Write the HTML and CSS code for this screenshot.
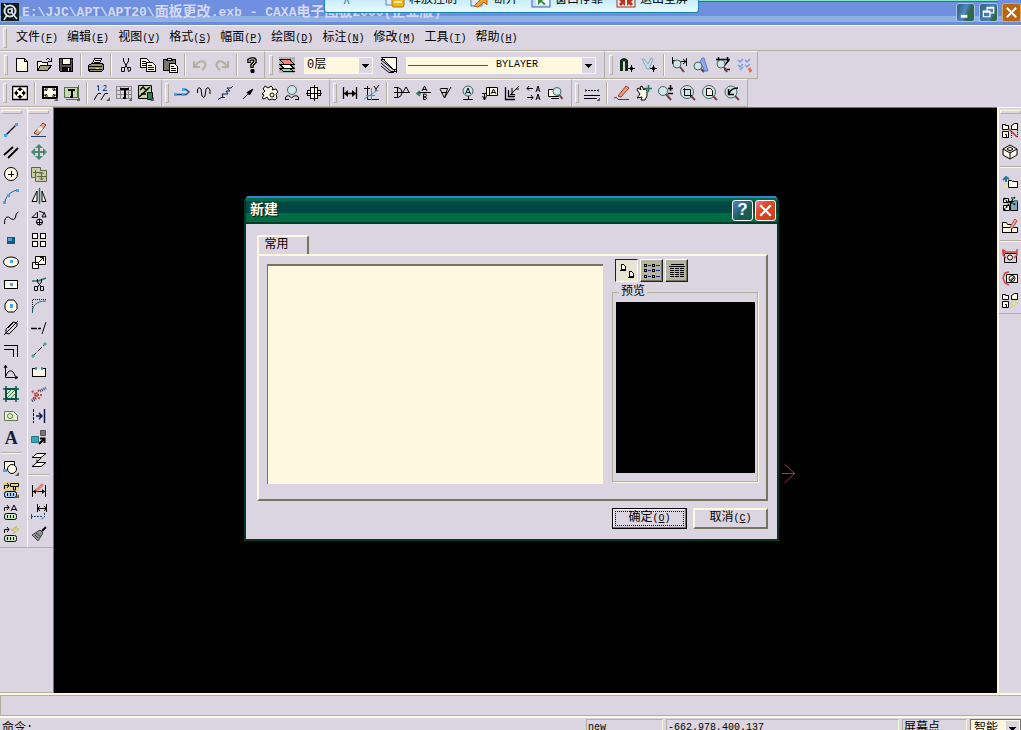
FILE: index.html
```html
<!DOCTYPE html>
<html lang="zh-CN">
<head>
<meta charset="utf-8">
<title>CAXA电子图板2000(企业版)</title>
<link rel="stylesheet" href="styles.css">
</head>
<body>
<header class="titlebar">
  <svg class="appicon" viewBox="0 0 18 18"><rect width="18" height="18" fill="#0a1c14"/><circle cx="9" cy="8" r="5.5" fill="none" stroke="#dde" stroke-width="2"/><circle cx="9" cy="8" r="2" fill="none" stroke="#dde" stroke-width="1.5"/><path d="M11 5v5l5 6M6 12l-3 5M3 1l3 3" stroke="#dde" stroke-width="1.5" fill="none"/></svg>
  <h1 class="title"><span>E:\JJC\APT\APT20\</span>面板更改<span>.exb - CAXA</span>电子图板<span>2000(</span>企业版<span>)</span></h1>
  <div class="winbtns">
    <button class="wb min" aria-label="最小化"><svg viewBox="0 0 18 18"><path d="M4 13h7" stroke-width="3"/></svg></button>
    <button class="wb max" aria-label="还原"><svg viewBox="0 0 18 18"><path d="M3.500 7.500h7v6h-7zM4 8.500h7M7.500 7V3.500h7v6H11M7 4.500h7" stroke-width="1.3"/></svg></button>
    <button class="wb close" aria-label="关闭"><svg viewBox="0 0 18 18"><path d="M4 4l10 10M14 4L4 14" stroke-width="2"/></svg></button>
  </div>
  <div class="mint"></div>
  <div class="remote">
    <button class="rb"><svg viewBox="0 0 20 16"><rect x="1" y="0" width="12" height="13" fill="#e4edf8" stroke="#5b82c0"/><rect x="7" y="5" width="12" height="10" rx="2" fill="#f5b81c" stroke="#b96e0c"/><path d="M9 10h8" stroke="#fff2a8" stroke-width="2"/></svg>释放控制</button>
    <button class="rb"><svg viewBox="0 0 20 16"><path d="M1 14V3h11v11z" fill="#dce9f8" stroke="#4c79b8"/><path d="M4 14l7-7-2-3h8v9l-3-3-6 5z" fill="#f5a02c" stroke="#b85e10"/></svg>断开</button>
    <button class="rb"><svg viewBox="0 0 20 16"><rect x="1" y="1" width="18" height="14" fill="#c8dcf4" stroke="#3d6ab0"/><rect x="5" y="2" width="13" height="11" fill="#eef6ff"/><path d="M7 13V7h6l-2 2 4 3-2 1-3-3z" fill="#318b30"/></svg>窗口停靠</button>
    <button class="rb"><svg viewBox="0 0 20 16"><rect x="1" y="1" width="18" height="14" fill="#fbeee8" stroke="#913522"/><path d="M3 3l5 5V3zM17 3l-5 5V3zM9 14V8H3l2 2-2 2 2 2 2-2zM11 14V8h6l-2 2 2 2-2 2-2-2z" fill="#b4341c"/></svg>退出全屏</button>
  </div>
</header>

<nav class="menubar">
  <i class="grip"></i>
  <button class="mi">文件<span>(<u>F</u>)</span></button>
  <button class="mi">编辑<span>(<u>E</u>)</span></button>
  <button class="mi">视图<span>(<u>V</u>)</span></button>
  <button class="mi">格式<span>(<u>S</u>)</span></button>
  <button class="mi">幅面<span>(<u>P</u>)</span></button>
  <button class="mi">绘图<span>(<u>D</u>)</span></button>
  <button class="mi">标注<span>(<u>N</u>)</span></button>
  <button class="mi">修改<span>(<u>M</u>)</span></button>
  <button class="mi">工具<span>(<u>T</u>)</span></button>
  <button class="mi">帮助<span>(<u>H</u>)</span></button>
</nav>

<div class="row std">
  <div class="band">
    <i class="grip"></i>
    <button class="tb" aria-label="新建"><svg viewBox="0 0 16 16"><path class="w" d="M2.500 1.500h8l3 3v10h-11zM10.500 1.500v3h3"/></svg></button>
    <button class="tb" aria-label="打开"><svg viewBox="0 0 16 16"><path class="w" d="M1.500 13.500v-9h4l1 1h5v3"/><path fill="#a8a47c" d="M1.500 13.500l3-5h11l-4 5z"/><path d="M9.500 3.500c2-3 4-2 5 0M15.500 1v3.500H12"/></svg></button>
    <button class="tb" aria-label="保存"><svg viewBox="0 0 16 16"><path fill="#55584a" d="M1.500 1.500h13v13h-12l-1-1z"/><path class="w" d="M4.500 1.500h8v6h-8z"/><path fill="#111" d="M4.500 10.500h8v4h-8z"/><path stroke="#eee" d="M10.500 11v3"/></svg></button>
    <i class="sep"></i>
    <button class="tb" aria-label="打印"><svg viewBox="0 0 16 16"><path class="w" d="M4.500 6.500l2-5h7l-2 5"/><path d="M7 3.500h5M6 5.500h5"/><path fill="#969478" d="M.500 8.500l3-2h11l1 2v4l-2 2h-12l-1-2z"/><path d="M1 9.500h13M1 12.500h13"/><path stroke="#e8dc40" d="M8 11.500h3"/></svg></button>
    <i class="sep"></i>
    <button class="tb" aria-label="剪切"><svg class="s" viewBox="0 0 16 16"><path d="M5.500 1v3l4 7M10.500 1v3l-4 7M6.500 10.500h-3v4h3zM9.500 10.500h3v3l-2 1z"/></svg></button>
    <button class="tb" aria-label="复制"><svg viewBox="0 0 16 16"><path class="w" d="M.500 1.500h6l3 3v6h-9z"/><path d="M2 4.500h4M2 6.500h5M2 8.500h5"/><path class="w" d="M6.500 5.500h6l3 3v6h-9z"/><path d="M8 8.500h4M8 10.500h6M8 12.500h6"/></svg></button>
    <button class="tb" aria-label="粘贴"><svg viewBox="0 0 16 16"><path fill="#77786a" d="M1.500 2.500h12v11h-12z"/><path class="w" d="M4.500 3.500l2-2.500h2l2 2.500z"/><path class="w" d="M7.500 6.500h5l3 3v6h-8z"/><path d="M9 9.500h3M9 11.500h5M9 13.500h5"/></svg></button>
    <i class="sep"></i>
    <button class="tb" aria-label="撤销"><svg class="off s" viewBox="0 0 16 16"><path d="M2 4v6h6M3 9c3-5 8-6 10-3s-1 5-3 7" stroke-width="2"/></svg></button>
    <button class="tb" aria-label="重做"><svg class="off s" viewBox="0 0 16 16"><path d="M14 4v6H8M13 9C10 4 5 3 3 6s1 5 3 7" stroke-width="2"/></svg></button>
    <i class="sep"></i>
    <button class="tb" aria-label="帮助"><svg class="s" viewBox="0 0 16 16"><path d="M5 6V3l2-1h3l1 1v2L8 8v3" stroke-width="3.5"/><path d="M7 12.500h3v3H7z" fill="#000"/><path d="M5 5V3l2-1h3l1 1v2L8 8v2" stroke="#e8dfa8"/></svg></button>
  </div>
  <div class="band combos">
    <i class="grip"></i>
    <button class="tb" aria-label="图层"><svg viewBox="0 0 16 16"><rect x="0" y="0" width="16" height="16" fill="#b8b1aa" stroke="none"/><path fill="#7ce0c8" d="M1 11.500h10l4 3H5z"/><path class="w" d="M1 7.500h10l4 4H5z"/><path fill="#f3807c" d="M1 2.500h10l4 5H5z"/></svg></button>
    <label class="combo layer"><select aria-label="当前层"><option>0层</option></select></label>
    <button class="tb" aria-label="线型"><svg class="s" viewBox="0 0 16 16"><path class="w" d="M.500.500h15v15z"/><path d="M0 3l12 9.500h4M0 6l10 8.500h4M0 9l8 6.500h5M0 2.500h4"/></svg></button>
    <label class="combo ltype"><select aria-label="线型"><option>BYLAYER</option></select></label>
  </div>
  <div class="band">
    <i class="grip"></i>
    <button class="tb" aria-label="捕捉"><svg class="s" viewBox="0 0 16 16"><path stroke="#102c14" stroke-width="3" d="M2.500 14V4q2.500-3 5 0v10"/><path d="M12.500 8v7M9 11.500h7M11.500 10.500h2v2h-2z"/></svg></button>
    <button class="tb" aria-label="拾取过滤"><svg class="s" viewBox="0 0 16 16"><path stroke="#8da8b8" fill="#c4e0ea" d="M1 2l5 10h2l4-10-2-1-3 6-4-5z"/><path d="M12.500 8v7M9 11.500h7M11.500 10.500h2v2h-2z"/></svg></button>
    <i class="sep"></i>
    <button class="tb" aria-label="查询距离"><svg class="s" viewBox="0 0 16 16"><path d="M1.500 0v7M15.500 1v8M2 3.500h3M9 4.500h6M12 2l3 2.500-3 2.500"/><circle class="lens" cx="6" cy="7" r="4"/><path class="handle" d="M9 10l4 5"/></svg></button>
    <button class="tb" aria-label="查询属性"><svg class="s" viewBox="0 0 16 16"><path stroke="#6478cc" fill="#92a5e8" d="M4 11L9 1h2l4 13h-4l-1-4H6"/><circle class="lens" cx="5" cy="9" r="4"/><path class="handle" d="M8 12l3 3"/></svg></button>
    <button class="tb" aria-label="查询面积"><svg class="s" viewBox="0 0 16 16"><path d="M1 2.500h14M3.500 0v4M12.500 0v4M9 12.500h6M14 3L9 9" stroke-width="1.5"/><circle class="lens" cx="6" cy="7" r="4"/><path class="handle" d="M9 10l3 5"/></svg></button>
    <button class="tb" aria-label="系统状态"><svg class="s" viewBox="0 0 16 16"><path stroke="#7c9be0" stroke-width="1.5" d="M1 3l2 2 3-3M8 3l2 2 3-3M1 8l2 2 3-3M8 8l2 2 3-3M3 13l3-3"/><path stroke="#e87048" stroke-width="3" d="M12 11l2 4"/></svg></button>
  </div>
</div>

<div class="row draw">
  <div class="band">
    <i class="grip"></i>
    <button class="tb" aria-label="图纸幅面"><svg class="s" viewBox="0 0 16 16"><path class="w" d="M.500 1.500h15v13H.500z" stroke-width="1.5"/><path d="M8 4v2M8 10v2M4 8h2M10 8h2" stroke-width="2"/><path fill="#000" stroke="none" d="M8 2l3 3H5zM8 14l3-3H5zM2 8l3-3v6zM14 8l-3-3v6z"/></svg></button>
    <i class="sep"></i>
    <button class="tb" aria-label="调入图框"><svg class="s" viewBox="0 0 16 16"><path class="w" stroke-width="2" d="M1 2h14v11H1z"/><path d="M3 4l2 2M13 4l-2 2M3 11l2-2M13 11l-2-2M3 6V4h3M10 4h3v2M3 9v2h3M10 11h3V9"/><path class="more" d="M16 12v4h-4z"/></svg></button>
    <button class="tb" aria-label="调入标题栏"><svg viewBox="0 0 16 16"><path fill="#c3dba9" stroke="#587048" d="M.500 2.500h13v10H.500z"/><path d="M4 5h7M7.500 5v7M6 12h3" stroke-width="2"/><path stroke="#587048" d="M14.500 0v14H2"/><path class="more" d="M16 12v4h-4z"/></svg></button>
    <i class="sep"></i>
    <button class="tb" aria-label="零件序号"><svg class="s" viewBox="0 0 16 16"><path stroke="#143c8c" d="M3 1.500l1.500-1V6M9 1.500l1-1h2v2l-3 3h4"/><path d="M0 15l4-6.500h3M7 15l4-6.500h3"/><path class="more" d="M16 12v4h-4z"/></svg></button>
    <button class="tb" aria-label="明细表"><svg viewBox="0 0 16 16"><path stroke="#888" d="M.500 1.500h15v12H.500zM0 5.500h15M0 9.500h15M4.500 1v12M12.500 1v12"/><path stroke-width="2" d="M4 4h9M8.500 4v9M7 13h3"/><path class="more" d="M16 12v4h-4z"/></svg></button>
    <button class="tb" aria-label="背景设置"><svg class="s" viewBox="0 0 16 16"><path fill="#c5d3a0" d="M.500.500h13v13H.500z"/><path stroke-width="1.5" d="M2 5l3-3 3 3 4-3M1 12l10-9M3 9h5"/><path fill="#278058" d="M9.500 7.500h5v7h-5z"/><path class="more" d="M16 12v4h-4z"/></svg></button>
  </div>
  <div class="band">
    <i class="grip"></i>
    <button class="tb" aria-label="轮廓线"><svg class="s" viewBox="0 0 16 16"><path stroke="#173e70" stroke-width="1.3" d="M1 9.500h8M9 4.500h3l3 2.500-3 2.500H9"/><path class="dot" d="M0 8h3v3H0zM8 8h3v3H8zM8 3h3v3H8z"/></svg></button>
    <button class="tb" aria-label="波浪线"><svg class="s" viewBox="0 0 16 16"><path d="M1.500 8V5q1-4 3.500-1l1 7q2 3 3 0l1-7q2-3 4 1v4"/></svg></button>
    <button class="tb" aria-label="双折线"><svg class="s" viewBox="0 0 16 16"><path stroke="#0c2050" d="M0 14.500l5-3-1-2.500h6L8 6h4l-3-3h4l2-2M3 12.500h4"/></svg></button>
    <button class="tb" aria-label="箭头"><svg class="s" viewBox="0 0 16 16"><path d="M3 14l7-7"/><path fill="#000" d="M13 4L7 7.500l2.500 2.500z"/></svg></button>
    <button class="tb" aria-label="齿轮"><svg class="s" viewBox="0 0 16 16"><path class="w" d="M1 4l2-3 3 2 3-2 2 2-1 2 4-1 2 3-2 2 1 4-2 2-3-1-3 1-2-3-3 2-2-1 2-3-2-1 3-3z"/><circle cx="10" cy="10" r="2"/></svg></button>
    <button class="tb" aria-label="圆弧拟合"><svg class="s" viewBox="0 0 16 16"><circle class="lens" cx="8" cy="5" r="4.500"/><path d="M1.500 15v-3q3-3 6 1 4-4 7-1v3M1 14.500h4M11 14.500h4"/></svg></button>
    <button class="tb" aria-label="孔轴"><svg viewBox="0 0 16 16"><path class="w" d="M4.500 2.500h7v11h-7zM1.500 5.500h3v5h-3zM11.500 5.500h3v5h-3z"/><path d="M0 8.500h16M8.500 0v16"/></svg></button>
  </div>
  <div class="band">
    <i class="grip"></i>
    <button class="tb" aria-label="尺寸标注"><svg class="s" viewBox="0 0 16 16"><path stroke-width="1.3" d="M1.500 2v12M14.500 2v12M2 8.500h12"/><path fill="#000" stroke="none" d="M2 8.500L6 5v7zM14 8.500L10 5v7z"/></svg></button>
    <button class="tb" aria-label="坐标标注"><svg class="s" viewBox="0 0 16 16"><path d="M0 3.500h6M3.500 1v13.500H15M10 1l2 3 3-4M12 4v2"/><path stroke="#319bd0" d="M0 14L14 5M7.500 3v12M2 10.500h9"/></svg></button>
    <i class="sep"></i>
    <button class="tb" aria-label="倒角标注"><svg class="s" viewBox="0 0 16 16"><path d="M0 2.500h4q4 1 4 5t-4 5H0M3.500 2v11M0 7.500h16M9 7l3-5 3 5"/></svg></button>
    <button class="tb" aria-label="引出说明"><svg class="s" viewBox="0 0 16 16"><path d="M6 6l2.500-5L11 6M7 4.500h3M2 7.500h13M7.500 9v5.500h2q2-1 0-2.500h-2 2q2-2 0-3z"/><path stroke="#277a50" stroke-width="1.500" d="M1 8.500h4M4 6L1 8.500 4 11"/></svg></button>
    <button class="tb" aria-label="粗糙度"><svg class="s" viewBox="0 0 16 16"><path d="M2.500 3.500h7L6.500 13 2 4M4 7.500h5M6.500 13L13 2"/></svg></button>
    <button class="tb" aria-label="基准代号"><svg class="s" viewBox="0 0 16 16"><circle class="lens" cx="8" cy="6" r="5"/><path d="M5.500 9L8 3l2.500 6M7 7.500h3M8.500 11v3M3 14.500h10"/></svg></button>
    <button class="tb" aria-label="形位公差"><svg class="s" viewBox="0 0 16 16"><path class="w" d="M4.500 2.500h11v8h-11z"/><path d="M7.500 2v8M9 9l2.500-5L14 9M10 7.500h3M0 8.500h4M2.500 8v7M.500 11l2 4 2-4"/></svg></button>
    <button class="tb" aria-label="焊接符号"><svg class="s" viewBox="0 0 16 16"><path stroke-width="1.3" d="M1.500 2v12.500H11M4.500 5v6.500H11"/><path d="M6 10l6-6M8 9V3M6 9.500h5M12 4l3-3M12 4h3"/></svg></button>
    <button class="tb" aria-label="剖切符号"><svg class="s" viewBox="0 0 16 16"><path d="M1 3.500h6M3 1L1 3.500l2 2M1 12.500h6M5 10l2 2.500-2 2.500M10 7l2-6 2 6M11 5h2M10 15l2-6 2 6M11 13h2"/></svg></button>
    <button class="tb" aria-label="局部放大"><svg class="s" viewBox="0 0 16 16"><path class="w" d="M.500 4.500h10v7H.500z"/><path d="M3 13.500h8"/><circle class="lens" cx="9" cy="6.500" r="4"/><path class="handle" d="M11.500 10l3 4"/></svg></button>
  </div>
  <div class="band">
    <i class="grip"></i>
    <button class="tb" aria-label="标注风格"><svg viewBox="0 0 16 16"><path stroke-dasharray="2 1" d="M1 5.500h14"/><path d="M0 10.500h16M0 13.500h13"/><path stroke="#278058" d="M1.500 4v3M14.500 4v3"/><path class="more" d="M16 12v4h-4z"/></svg></button>
    <i class="sep"></i>
    <button class="tb" aria-label="重画"><svg class="s" viewBox="0 0 16 16"><path stroke="#9c3b27" fill="#ef9b7b" d="M4 11l8-10 3 2-8 9z"/><path stroke="#314070" d="M0 13q3-2 4 1.500h11"/></svg></button>
    <button class="tb" aria-label="平移"><svg class="s" viewBox="0 0 16 16"><path class="w" d="M2 3l3 2-1-3 2-1 2 4 1-2 2 3v5l-2 4H5l1-3-5 1 3-4-3-4z"/><path stroke="#17705c" stroke-width="1.500" d="M12.500 0v7M9 3.500h7"/></svg></button>
    <button class="tb" aria-label="缩放"><svg class="s" viewBox="0 0 16 16"><circle class="lens" cx="5" cy="6" r="4.500"/><path class="handle" d="M8 9l5 6"/><path stroke-width="1.500" d="M12.500 0v6M10 3.500h5M10 8.500h5"/></svg></button>
    <button class="tb" aria-label="窗口缩放"><svg class="s" viewBox="0 0 16 16"><circle class="lens" cx="7" cy="7" r="6.500"/><path class="handle" d="M11 11l4 4"/><path d="M3 4.500h7.500V12M4.500 3v7.500H12"/></svg></button>
    <button class="tb" aria-label="全部显示"><svg class="s" viewBox="0 0 16 16"><circle class="lens" cx="7" cy="7" r="6.500"/><path class="handle" d="M11 11l4 4"/><path class="w" d="M4.500 3.500h4l2 2v5h-6z"/></svg></button>
    <button class="tb" aria-label="显示回溯"><svg class="s" viewBox="0 0 16 16"><circle class="lens" cx="7" cy="7" r="6"/><path class="handle" d="M11 11l4 4"/><path stroke-width="1.500" d="M4.500 4v5.500H10M5 9c1-4 5-6 9-6"/></svg></button>
  </div>
</div>

<main class="work">
  <div class="side left">
    <div class="col">
      <i class="vgrip"></i>
      <button class="tb" aria-label="直线"><svg class="s" viewBox="0 0 16 16"><path d="M2 14L14 2" stroke-width="1.3"/><path class="dot" d="M1 12h3v3H1zM12 1h3v3h-3z"/></svg></button>
      <button class="tb" aria-label="平行线"><svg class="s" viewBox="0 0 16 16"><path d="M1 11l9-8M5 14L15 4" stroke-width="1.800"/></svg></button>
      <button class="tb" aria-label="圆"><svg class="s" viewBox="0 0 16 16"><circle class="w" cx="8" cy="8" r="6.500"/><path d="M8.500 5v6M5 8.500h6"/></svg></button>
      <button class="tb" aria-label="圆弧"><svg class="s" viewBox="0 0 16 16"><path stroke="#205898" d="M2 14C3 8 7 4 14 2"/><path class="dot" d="M0 13h3v3H0zM4 6h3v3H4zM13 1h3v3h-3z"/></svg></button>
      <button class="tb" aria-label="样条"><svg class="s" viewBox="0 0 16 16"><path d="M1.500 14q0-8 4-7 6 5 7 0 0-4 3-5"/></svg></button>
      <button class="tb" aria-label="点"><svg viewBox="0 0 16 16"><path stroke="none" fill="#175878" d="M4 5h8v7H4z"/><path class="dot" d="M5 6h4v3H5z"/></svg></button>
      <button class="tb" aria-label="椭圆"><svg class="s" viewBox="0 0 16 16"><ellipse class="w" cx="8" cy="8" rx="7.500" ry="5"/><path class="dot" d="M7 6h3v3H7z"/></svg></button>
      <button class="tb" aria-label="矩形"><svg viewBox="0 0 16 16"><path class="w" d="M1.500 4.500h13v8h-13z"/><path class="dot" d="M7 7h3v3H7z"/></svg></button>
      <button class="tb" aria-label="正多边形"><svg class="s" viewBox="0 0 16 16"><path class="w" d="M5 2h6l3 4v5l-3 3H5l-3-3V6z"/><path class="dot" d="M7 6h3v4H7z"/></svg></button>
      <button class="tb" aria-label="中心线"><svg class="s" viewBox="0 0 16 16"><path d="M3 9l7-7 4 1v3l-8 8-3-1zM1 15L15 1M5 8l5-5"/></svg></button>
      <button class="tb" aria-label="等距线"><svg viewBox="0 0 16 16"><path d="M1 3.500h13.500V15M1 7.500h9.500V15"/></svg></button>
      <button class="tb" aria-label="公式曲线"><svg class="s" viewBox="0 0 16 16"><path d="M2.500 2v11.500H15M1 4l1.500-3L4 4M12 12l3 1.500-3 1.500M3 12c2-7 7-7 9 0"/></svg></button>
      <button class="tb" aria-label="剖面线"><svg class="s" viewBox="0 0 16 16"><path stroke="#0c5145" fill="#d8ebc9" stroke-width="2" d="M3 3h10v10H3z"/><path stroke="#0c5145" stroke-width="1.500" d="M0 3h16M0 13h16M3 0v16M13 0v16"/><path stroke="#417854" d="M4 8l5-5M4 12l9-9M8 12l5-5"/></svg></button>
      <button class="tb" aria-label="填充"><svg class="s" viewBox="0 0 16 16"><path stroke="#60784f" fill="#e8f2cf" d="M1.500 3.500h9l4 4v5h-13z"/><circle stroke="#60784f" cx="7" cy="8" r="2.500"/></svg></button>
      <button class="tb letter" aria-label="文字">A</button>
      <i class="hsep"></i>
      <button class="tb" aria-label="块生成"><svg class="s" viewBox="0 0 16 16"><path class="w" d="M1.500 1.500h10v8h-10z"/><circle class="w" cx="9" cy="9" r="4.500"/><path class="dot" d="M0 9h4v3H0z"/><path class="more" d="M16 12v4h-4z"/></svg></button>
      <button class="tb" aria-label="提取图符"><svg class="s" viewBox="0 0 16 16"><path fill="#e3d38e" stroke="none" d="M0 0h16v9H0z"/><path d="M1.500 7V3.500H6M4 1l2 2.500L4 6M7.500 1.500h8v3h-8zM10.500 5v3h2V5"/><rect class="pill" x="1.500" y="9.500" width="12" height="6" rx="2"/><path d="M4.500 11v3M7.500 11v3M10.500 11v3"/><path class="more" d="M16 12v4h-4z"/></svg></button>
      <button class="tb" aria-label="驱动图符"><svg class="s" viewBox="0 0 16 16"><path d="M1.500 7V3.500H6M4 1l2 2.500L4 6M8 7l3-6 3 6M9 5.500h4"/><rect fill="#c5e8bc" x="1.500" y="9.500" width="12" height="6" rx="2"/><path d="M4.500 11v3M7.500 11v3M10.500 11v3"/></svg></button>
      <button class="tb" aria-label="图库管理"><svg class="s" viewBox="0 0 16 16"><path d="M1.500 7V3.500H6M4 1l2 2.500L4 6"/><path stroke="#c4b75c" fill="#f2e994" d="M14 0L8 4h4l-2 4 6-5h-4z"/><rect fill="#c5e8bc" x="1.500" y="9.500" width="12" height="6" rx="2"/><path d="M4.500 11v3M7.500 11v3M10.500 11v3"/></svg></button>
    </div>
    <div class="col">
      <i class="vgrip"></i>
      <button class="tb" aria-label="删除"><svg class="s" viewBox="0 0 16 16"><path fill="#ecaf8e" stroke="#6c3b30" d="M3 11l9-10 3 2-8 10z"/><path fill="#f3eee2" stroke="none" d="M6 7l3-3 3 3-3 3z"/><path stroke="#203c70" d="M0 14.500h15"/></svg></button>
      <button class="tb" aria-label="平移"><svg class="s" viewBox="0 0 16 16"><path fill="#4c8874" stroke="none" d="M8 0l4 4H9v3h3V4l4 4-4 4V9H9v3h3l-4 4-4-4h3V9H4v3L0 8l4-4v3h3V4H4z"/></svg></button>
      <button class="tb" aria-label="复制对象"><svg class="s" viewBox="0 0 16 16"><path fill="#c8cca0" stroke="#5c6448" d="M.500 1.500h9v3h6v11h-11v-4h-4z"/><path stroke="#5c6448" d="M4.500 4v8M10.500 6v8M6 10.500h9M8.500 8l2-2 2 2M8.500 12l2 2 2-2M2 6.500h8"/></svg></button>
      <button class="tb" aria-label="镜像"><svg class="s" viewBox="0 0 16 16"><path class="w" d="M6 3v10.500H1zM11 3v10.500h4z"/><path stroke="#247058" stroke-width="1.500" d="M8.500 0v16"/></svg></button>
      <button class="tb" aria-label="旋转"><svg class="s" viewBox="0 0 16 16"><path d="M1 7.500L6.500 2v5.500zM8 1l5 2-2 4h4l-2-5"/><circle cx="8.500" cy="12" r="3"/><path d="M8.500 9v6M5 12.500h7"/></svg></button>
      <button class="tb" aria-label="阵列"><svg viewBox="0 0 16 16"><path class="w" d="M1.500 1.500h5v5h-5zM9.500 1.500h5v5h-5zM1.500 9.500h5v5h-5zM9.500 9.500h5v5h-5z"/></svg></button>
      <button class="tb" aria-label="缩放对象"><svg class="s" viewBox="0 0 16 16"><path class="w" d="M4.500 2.500h10v8h-10zM1.500 8.500h6v6h-6z"/><path d="M8 8l4-4M9 3.500h3.500V7"/></svg></button>
      <button class="tb" aria-label="裁剪"><svg class="s" viewBox="0 0 16 16"><path stroke="#277264" stroke-width="1.500" d="M1 5h6l8-3"/><path d="M6.500 3v3l4 5M10.500 3v3l-4 5M6.500 10.500h-3v4h3zM9.500 10.500h3v4h-3z"/></svg></button>
      <button class="tb" aria-label="过渡"><svg class="s" viewBox="0 0 16 16"><path stroke-dasharray="1 1" d="M1.500 15V1.500H15"/><path stroke="#206878" d="M1.500 15C1 8 5 3 15 3"/></svg></button>
      <button class="tb" aria-label="延伸"><svg class="s" viewBox="0 0 16 16"><path stroke-width="1.500" d="M0 8.500h6M7 8.500h3"/><path d="M11 14l4-12"/></svg></button>
      <button class="tb" aria-label="拉伸"><svg class="s" viewBox="0 0 16 16"><path d="M1 15L15 1" stroke-dasharray="6 2"/><path stroke="#33a898" stroke-width="2.500" d="M1 15l2-2M13 3l2-2"/></svg></button>
      <button class="tb" aria-label="打断"><svg viewBox="0 0 16 16"><path class="w" d="M5 4.500H1.500v8h13v-8H11"/><path stroke="#35a1a8" stroke-width="2" d="M5 3v3M11 3v3"/></svg></button>
      <button class="tb" aria-label="打散"><svg class="s" viewBox="0 0 16 16"><path stroke="#c44b46" stroke-width="2" stroke-dasharray="2 1" d="M1 5l8 8M2 13l6-9M6 9h5"/><path stroke="#364470" stroke-dasharray="1 1" stroke-width="3" d="M9 5l6-3M1 15l4-3"/></svg></button>
      <button class="tb" aria-label="对齐"><svg class="s" viewBox="0 0 16 16"><path stroke-dasharray="3 1" d="M2.500 1v14"/><path stroke="#08184c" stroke-width="1.500" d="M13.500 1v14M5 8h6M8 5l3 3-3 3"/></svg></button>
      <button class="tb" aria-label="块打散"><svg class="s" viewBox="0 0 16 16"><path fill="#35a8b8" stroke="#287484" d="M.500 6.500h7v6h-7z"/><path fill="#777" stroke="#555" d="M9.500.500h5v5h-5z"/><path d="M8 14l5-5M9 8.500h4.500V13" stroke-width="2"/></svg></button>
      <button class="tb" aria-label="层修改"><svg class="s" viewBox="0 0 16 16"><path class="w" d="M1 5.500l5-4h9l-5 4zM1 14.500l5-4h9l-5 4z"/><path d="M10 6l-4 4M6 7.500V11"/></svg></button>
      <i class="hsep"></i>
      <button class="tb" aria-label="标注修改"><svg class="s" viewBox="0 0 16 16"><path d="M1.500 3v12M14.500 3v12M1 9.500h14"/><path fill="#000" stroke="none" d="M2 9.500L5 7v5zM14 9.500L11 7v5z"/><path stroke="#e08670" stroke-width="3" d="M5 9l7-7"/></svg></button>
      <button class="tb" aria-label="尺寸驱动"><svg class="s" viewBox="0 0 16 16"><path d="M6.500 0v8M15.500 0v8M6 4.500h9M9 2L6.500 4.500 9 7M13 2l2.500 2.500L13 7"/><path stroke="#184880" stroke-dasharray="2 1" d="M0 12.500h11M.500 10v5M13.500 9v4l-3 2"/></svg></button>
      <button class="tb" aria-label="格式刷"><svg class="s" viewBox="0 0 16 16"><path stroke-width="2" d="M15 1l-4 4"/><path fill="#8b9393" stroke="#444" d="M9 4l3 3-5 8-6-6z"/><path stroke="#444" d="M5 7l5 4M4 9l3 3"/></svg></button>
    </div>
  </div>
  <section class="canvas">
    <svg class="axis" viewBox="0 0 14 22"><path d="M0 10.500h13M2.500 1l10 9.500-10 9.500"/></svg>
    <div class="dialog" role="dialog" aria-label="新建">
      <div class="dtitle">
        <h2>新建</h2>
        <button class="db help" aria-label="帮助">?</button>
        <button class="db x" aria-label="关闭"><svg viewBox="0 0 18 18"><path d="M4 4l10 10M14 4L4 14"/></svg></button>
      </div>
      <div class="dbody">
        <button class="tab">常用</button>
        <div class="panel">
          <div class="list"></div>
          <div class="aside">
            <div class="views">
              <button class="vb on" aria-label="大图标"><svg viewBox="0 0 16 16"><path class="w" d="M2.500 1.500h2l2 2v3h-4zM10.500 8.500h2l2 2v3h-4z"/><path d="M1 7.500h6M9 14.500h6"/></svg></button>
              <button class="vb" aria-label="列表"><svg viewBox="0 0 16 16"><path d="M.500 1.500h2v2h-2zM.500 6.500h2v2h-2zM.500 12.500h2v2h-2zM8.500 1.500h2v2h-2zM8.500 6.500h2v2h-2zM8.500 12.500h2v2h-2z"/><path stroke="#182488" d="M4 2.500h3M4 7.500h3M4 13.500h3M12 2.500h4M12 7.500h4M12 13.500h4"/></svg></button>
              <button class="vb" aria-label="详细资料"><svg viewBox="0 0 16 16"><path d="M2 1.500h13M0 3.500h16"/><path stroke-dasharray="4 1" d="M1 5.500h15M1 7.500h15M1 9.500h15M1 11.500h15M1 13.500h15"/></svg></button>
            </div>
            <fieldset class="preview"><legend>预览</legend><div class="pic"></div></fieldset>
          </div>
        </div>
        <div class="actions">
          <button class="pb ok">确定<span>(<u>O</u>)</span></button>
          <button class="pb">取消<span>(<u>C</u>)</span></button>
        </div>
      </div>
    </div>
  </section>
  <div class="side right">
    <div class="col">
      <i class="vgrip"></i>
      <button class="tb" aria-label="块操作"><svg class="s" viewBox="0 0 16 16"><path class="w" d="M.500 2.500h3v1h3v4h-6zM9.500 7.500v-4l3-2h3v6zM.500 9.500h6v6h-6z"/><path d="M3 12.500h1.500V16"/><path stroke="#b62f2b" stroke-width="1.500" d="M7 7l8 8"/><path stroke-dasharray="1 1" d="M9.500 9v7M15.500 8v7"/></svg></button>
      <button class="tb" aria-label="三维块"><svg class="s" viewBox="0 0 16 16"><path class="w" d="M1 5l7-4 7 4v6l-7 4-7-4zM1 5l7 4 7-4M8 9v6"/><path d="M5 5l3-2 3 2-3 2z"/></svg></button>
      <i class="hsep"></i>
      <button class="tb" aria-label="库操作"><svg class="s" viewBox="0 0 16 16"><path stroke="#277894" stroke-width="2" d="M1 6l3-3 3 2M4 4v4"/><path stroke="#efe5a2" stroke-width="3" d="M2 12h6"/><path class="w" d="M6.500 6.500h3l1 1h5v6h-9z"/></svg></button>
      <button class="tb" aria-label="构件库"><svg class="s" viewBox="0 0 16 16"><path fill="#7da7bd" d="M8.500 5.500h7v9h-7z"/><path class="w" d="M1.500 2.500h5v4h-5zM1.500 9.500h6v5h-6z"/><path stroke-width="1.500" stroke-dasharray="2 1" d="M2 14L13 1M6 5l8 4M2 2l4 5"/><path stroke="#37956b" stroke-width="2" d="M9 2h3M12 5h4"/></svg></button>
      <button class="tb" aria-label="块消隐"><svg class="s" viewBox="0 0 16 16"><path class="w" d="M.500 4.500h4l1 2h4v8h-9zM.500 9.500h15v5h-15z"/><path stroke="#ba4b44" fill="#e8aaa0" d="M8 9l5-8 2 2-5 8z"/></svg></button>
      <i class="hsep"></i>
      <button class="tb" aria-label="尺寸关联"><svg class="s" viewBox="0 0 16 16"><path d="M2.500 5.500h12v9h-12z"/><path stroke="#d4443c" stroke-width="1.500" d="M1 1v6l3 3M15 1v6l-3 3M1 4h14M3 2L1 4l2 2"/><circle class="w" cx="8" cy="9.500" r="2.500"/></svg></button>
      <button class="tb" aria-label="图形关联"><svg class="s" viewBox="0 0 16 16"><path class="w" d="M4.500 4.500h11v8h-11z"/><path stroke="#d4443c" stroke-width="1.500" d="M7 2L3 3 1 8l2 5 4 2"/><circle cx="10" cy="8.500" r="3"/><path d="M8 10.500l4-4M9 11l3-3"/></svg></button>
      <button class="tb" aria-label="块编辑"><svg class="s" viewBox="0 0 16 16"><path class="w" d="M.500 2.500h3v1h3v4h-6zM9.500 7.500v-4l3-2h3v6zM.500 9.500h6v6h-6z"/><path d="M3 12.500h1.500V16"/><path stroke="#d3c98c" fill="#f4eba9" d="M14 8l-6 4h3l-2 4 7-5h-3z"/></svg></button>
    </div>
  </div>
</main>

<div class="cmd"><div class="cmdbox"></div></div>
<footer class="status">
  <span class="prompt">命令:</span>
  <span class="cell name">new</span>
  <span class="cell pos">-662.978,400.137</span>
  <span class="cell kind">屏幕点</span>
  <label class="combo snap"><select aria-label="捕捉方式"><option>智能</option></select></label>
</footer>
</body>
</html>
```
FILE: styles.css
```css
:root {
  --face: #dad5e1;
  --cream: #fff8e1;
  --shade: #b3ae9e;
  --dark: #77745f;
}
* { box-sizing: border-box; }
body {
  margin: 0;
  height: 100vh;
  overflow: hidden;
  display: flex;
  flex-direction: column;
  background: var(--face);
  color: #000;
  font: 12px/16px "Liberation Mono", "Noto Sans CJK SC", monospace;
}
button, select {
  font: inherit;
  color: inherit;
  margin: 0;
  padding: 0;
  border: 0;
  background: none;
}
svg { display: block; flex: none; }

/* window title */
.titlebar {
  position: relative;
  flex: none;
  height: 26px;
  display: flex;
  align-items: center;
  padding: 0 0 2px 1px;
  background: linear-gradient(#6f8fe0 0 16px, #8fb0e2 16px 22px, #6c8bd8 22px 25px, #fdf9ec 25px);
}
.appicon { width: 18px; height: 18px; }
.title {
  flex: 1;
  margin: 0 0 0 3px;
  font-size: 14px;
  font-weight: bold;
  color: #d5d8f2;
  white-space: nowrap;
}
.title span { font-size: 13px; }
.winbtns { display: flex; gap: 4px; }
.wb {
  width: 19px;
  height: 19px;
  border: 1px solid #a9c3e8;
  border-radius: 3px;
}
.wb svg { width: 17px; height: 17px; fill: none; stroke: #fff; }
.min { background: linear-gradient(110deg, #326a80 10%, #4f86cc 45%, #306a4c 65%); }
.max { background: linear-gradient(110deg, #326a80 10%, #4a80c0 60%, #306a4c 80%); }
.close { background: #b8660e; border-color: #d8a868; }
.mint {
  position: absolute;
  left: 698px;
  right: 23px;
  top: 0;
  height: 2px;
  background: #7fe6c4;
  border-bottom: 1px solid #1e7c70;
}
.remote {
  position: absolute;
  left: 324px;
  top: 0;
  width: 375px;
  height: 13px;
  overflow: hidden;
  display: flex;
  align-items: flex-start;
  gap: 13px;
  padding-left: 60px;
  background: linear-gradient(#c9ecfa, #e9fbff);
  border: 1px solid #1b86b4;
  border-top: 0;
  border-radius: 0 0 3px 3px;
}
.remote::before {
  content: "^";
  position: absolute;
  left: 18px;
  top: -4px;
  color: #2b5f9c;
}
.rb {
  flex: none;
  display: flex;
  align-items: center;
  gap: 4px;
  height: 16px;
  margin-top: -8px;
  white-space: nowrap;
}
.rb svg { width: 20px; height: 16px; }

/* menu and tool bars */
.menubar {
  flex: none;
  display: flex;
  align-items: center;
  height: 25px;
  padding-left: 3px;
  border-bottom: 1px solid var(--shade);
}
.menubar .grip { margin-right: 9px; }
.mi { margin-right: 9px; white-space: nowrap; }
.mi span, .pb span { font-size: 10px; }
.grip {
  flex: none;
  width: 4px;
  height: 20px;
  border: 1px solid;
  border-color: var(--cream) var(--shade) var(--shade) var(--cream);
}
.row {
  flex: none;
  display: flex;
  height: 28px;
}
.band {
  display: flex;
  align-items: center;
  padding: 0 2px 0 3px;
  border: 1px solid;
  border-color: var(--cream) var(--shade) var(--shade) var(--cream);
  border-left-width: 0;
}
.std .grip { margin: 0 3px 0 1px; }
.std .band { padding-right: 1px; }
.draw .band { padding-right: 4px; }
.draw .grip { margin-right: 2px; }
.tb {
  flex: none;
  width: 22px;
  height: 22px;
  display: flex;
  align-items: center;
  justify-content: center;
}
.tb svg, .vb svg {
  width: 16px;
  height: 16px;
  fill: none;
  stroke: #000;
  shape-rendering: crispEdges;
}
.tb .s { shape-rendering: auto; }
.tb .w, .vb .w { fill: #fffbe9; }
.tb .dot { fill: #46a5e4; stroke: none; }
.tb .more { fill: #5c6848; stroke: none; }
.tb .lens { fill: #cfe6e6; stroke: #47645f; }
.tb .handle { stroke: #70423f; stroke-width: 2; }
.tb .pill { fill: #9fcdf3; }
.tb .off { stroke: #b3ae9e; }
.letter { font: bold 18px/22px "Liberation Serif", serif; color: #142038; }
.sep {
  flex: none;
  width: 2px;
  height: 22px;
  margin: 0 3px;
  border-left: 1px solid var(--shade);
  border-right: 1px solid var(--cream);
}
.std .combos { padding-right: 8px; }
.combo {
  position: relative;
  display: flex;
  height: 17px;
  background: var(--cream);
}
.combo select {
  appearance: none;
  width: 100%;
  padding-left: 3px;
  border-radius: 0;
  outline: 0;
}
.combo::after {
  content: "";
  position: absolute;
  right: 1px;
  top: 1px;
  width: 13px;
  height: 15px;
  pointer-events: none;
  background: linear-gradient(#000, #000) 3px 6px / 7px 1px no-repeat,
    linear-gradient(#000, #000) 4px 7px / 5px 1px no-repeat,
    linear-gradient(#000, #000) 5px 8px / 3px 1px no-repeat,
    linear-gradient(#000, #000) 6px 9px / 1px 1px no-repeat, var(--face);
}
.layer { width: 69px; margin: 0 5px 0 6px; }
.ltype { width: 190px; margin-left: 6px; }
.ltype select { padding-left: 90px; font: 10px/16px "Liberation Mono", monospace; }
.ltype::before {
  content: "";
  position: absolute;
  left: 2px;
  top: 8px;
  width: 80px;
  height: 1px;
  background: #d81818;
}

/* work area */
.work {
  flex: 1;
  display: flex;
  min-height: 0;
}
.side { flex: none; display: flex; align-items: flex-start; }
.left { width: 54px; border-right: 1px solid var(--dark); border-bottom: 1px solid var(--shade); }
.right { width: 24px; border-left: 2px solid var(--cream); }
.col {
  display: flex;
  flex-direction: column;
  align-items: center;
  padding-bottom: 2px;
  border-top: 1px solid var(--cream);
  border-bottom: 1px solid var(--shade);
}
.left .col { width: 27px; padding-right: 4px; }
.left .col + .col { padding: 0 3px 2px 0; border-left: 1px solid var(--cream); }
.vgrip {
  width: 21px;
  height: 4px;
  margin: 2px 0 5px;
  border: 1px solid;
  border-color: var(--cream) var(--shade) var(--shade) var(--cream);
}
.hsep {
  width: 21px;
  height: 2px;
  margin: 3px 0;
  border-top: 1px solid var(--shade);
  border-bottom: 1px solid var(--cream);
}
.canvas {
  flex: 1;
  position: relative;
  background: #000;
  border-top: 1px solid var(--dark);
}
.axis {
  position: absolute;
  left: 728px;
  top: 355px;
  width: 14px;
  height: 22px;
  fill: none;
  stroke: #e01c38;
}

/* dialog */
.dialog {
  position: absolute;
  left: 190px;
  top: 88px;
  width: 535px;
  border: 2px solid #00382c;
  border-top: 0;
  border-radius: 5px 5px 0 0;
  background: var(--face);
  overflow: hidden;
}
.dtitle {
  display: flex;
  align-items: center;
  gap: 2px;
  height: 28px;
  padding: 0 1px 0 4px;
  background: linear-gradient(#2d86cc 0 2px, #006a4c 2px 5px, #004844 5px 17px, #006c44 17px 26px, #003c2c 26px);
}
.dtitle h2 {
  flex: 1;
  margin: 0;
  font-size: 14px;
  color: #fffbe6;
  text-shadow: 1px 1px 0 #001810;
}
.db {
  width: 21px;
  height: 21px;
  border: 1px solid #fff;
  border-radius: 3px;
  color: #fff;
}
.help { background: linear-gradient(135deg, #4a80d8, #1c5c50 60%); font: bold 17px/18px "Liberation Sans", sans-serif; }
.x { background: linear-gradient(135deg, #e878a0, #e04a24 35%, #c83c18); }
.x svg { width: 19px; height: 19px; stroke: #fff; stroke-width: 2; fill: none; }
.dbody { padding: 11px 9px 10px 11px; }
.tab {
  position: relative;
  z-index: 1;
  display: block;
  width: 52px;
  height: 19px;
  padding-right: 13px;
  line-height: 15px;
  background: var(--face);
  border: 2px solid var(--cream);
  border-right-color: var(--dark);
  border-bottom: 0;
  border-radius: 3px 3px 0 0;
}
.panel {
  display: flex;
  gap: 9px;
  height: 247px;
  padding: 8px 8px 15px 8px;
  border: 2px solid;
  border-color: var(--cream) var(--dark) var(--dark) var(--cream);
}
.list {
  flex: 1;
  background: var(--cream);
  border-top: 2px solid var(--dark);
  border-left: 1px solid var(--dark);
}
.aside { width: 146px; margin-top: -5px; }
.views { display: flex; gap: 2px; padding-left: 3px; }
.vb {
  width: 23px;
  height: 23px;
  display: grid;
  place-items: center;
  background: #b5b3a2;
  border: 1px solid;
  border-color: #fffbe9 #222 #222 #fffbe9;
  box-shadow: inset -1px -1px 0 #77745f;
}
.vb.on { background: #e8e4d4; border-color: #222 #fff #fff #222; box-shadow: none; }
.preview {
  min-width: 0;
  margin: 2px 0 0;
  padding: 0 2px 8px 3px;
  border: 1px solid var(--shade);
  box-shadow: 1px 1px 0 var(--cream);
}
.preview legend { margin-left: 3px; padding: 0 2px; line-height: 16px; }
.pic { height: 171px; margin-top: 2px; background: #000; }
.actions { display: flex; justify-content: flex-end; gap: 6px; margin-top: 7px; }
.pb {
  width: 75px;
  height: 21px;
  line-height: 16px;
  border: 2px solid;
  border-color: var(--cream) var(--dark) var(--dark) var(--cream);
}
.ok {
  border: 1px solid #000;
  box-shadow: inset -1px -1px 0 var(--dark), inset 1px 1px 0 var(--cream);
  outline: 1px dotted #000;
  outline-offset: -4px;
}

/* command line and status */
.cmd { flex: none; height: 25px; padding: 2px 0 2px; background: var(--cream); }
.cmdbox {
  height: 21px;
  background: var(--face);
  border: 1px solid var(--shade);
  border-right: 0;
}
.status {
  flex: none;
  height: 12px;
  overflow: hidden;
  display: flex;
  align-items: flex-start;
  gap: 3px;
  padding-top: 1px;
}
.prompt { flex: 1; padding: 2px 0 0 2px; }
.cell {
  height: 20px;
  padding-left: 1px;
  border: 1px solid;
  border-color: var(--shade) var(--cream) var(--cream) var(--shade);
  font-size: 10px;
}
.name { width: 77px; }
.pos { width: 233px; }
.kind { width: 65px; font-size: 12px; }
.snap { width: 51px; height: 20px; border: 1px solid var(--dark); }
```
